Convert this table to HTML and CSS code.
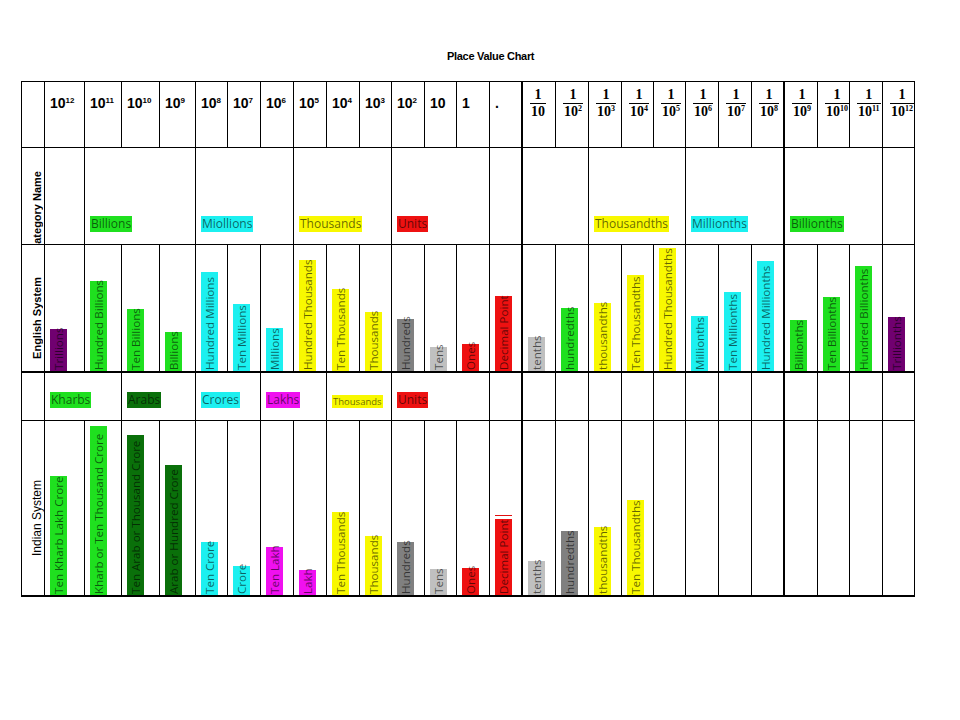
FILE: index.html
```html
<!DOCTYPE html>
<html>
<head>
<meta charset="utf-8">
<title>Place Value Chart</title>
<link rel="stylesheet" href="styles.css">
</head>
<body>
<div class="title">Place Value Chart</div>
<div class="chart">
  <!-- header row -->
  <div class="c"></div>
  <div class="c h"><span class="pw">10<sup>12</sup></span></div>
  <div class="c h"><span class="pw">10<sup>11</sup></span></div>
  <div class="c h"><span class="pw">10<sup>10</sup></span></div>
  <div class="c h"><span class="pw">10<sup>9</sup></span></div>
  <div class="c h"><span class="pw">10<sup>8</sup></span></div>
  <div class="c h"><span class="pw">10<sup>7</sup></span></div>
  <div class="c h"><span class="pw">10<sup>6</sup></span></div>
  <div class="c h"><span class="pw">10<sup>5</sup></span></div>
  <div class="c h"><span class="pw">10<sup>4</sup></span></div>
  <div class="c h"><span class="pw">10<sup>3</sup></span></div>
  <div class="c h"><span class="pw">10<sup>2</sup></span></div>
  <div class="c h"><span class="pw">10</span></div>
  <div class="c h"><span class="pw">1</span></div>
  <div class="c h tk"><span class="pw">.</span></div>
  <div class="c f"><span class="fr"><span class="n">1</span><span class="d">10</span></span></div>
  <div class="c f"><span class="fr"><span class="n">1</span><span class="d">10<sup>2</sup></span></span></div>
  <div class="c f"><span class="fr"><span class="n">1</span><span class="d">10<sup>3</sup></span></span></div>
  <div class="c f"><span class="fr"><span class="n">1</span><span class="d">10<sup>4</sup></span></span></div>
  <div class="c f"><span class="fr"><span class="n">1</span><span class="d">10<sup>5</sup></span></span></div>
  <div class="c f"><span class="fr"><span class="n">1</span><span class="d">10<sup>6</sup></span></span></div>
  <div class="c f"><span class="fr"><span class="n">1</span><span class="d">10<sup>7</sup></span></span></div>
  <div class="c f tk"><span class="fr"><span class="n">1</span><span class="d">10<sup>8</sup></span></span></div>
  <div class="c f"><span class="fr"><span class="n">1</span><span class="d">10<sup>9</sup></span></span></div>
  <div class="c f"><span class="fr"><span class="n">1</span><span class="d">10<sup>10</sup></span></span></div>
  <div class="c f"><span class="fr"><span class="n">1</span><span class="d">10<sup>11</sup></span></span></div>
  <div class="c f"><span class="fr"><span class="n">1</span><span class="d">10<sup>12</sup></span></span></div>

  <!-- category row -->
  <div class="c lab clip"><span class="vl vl-cat">Category Name</span></div>
  <div class="c cat"></div>
  <div class="c cat s3"><span class="tag g">Billions</span></div>
  <div class="c cat s3"><span class="tag c1">Miollions</span></div>
  <div class="c cat s3"><span class="tag y">Thousands</span></div>
  <div class="c cat s3"><span class="tag r">Units</span></div>
  <div class="c cat tk"></div>
  <div class="c cat s2"></div>
  <div class="c cat s3"><span class="tag y">Thousandths</span></div>
  <div class="c cat s3 tk"><span class="tag c1">Millionths</span></div>
  <div class="c cat s3"><span class="tag g">Billionths</span></div>
  <div class="c cat"></div>

  <!-- english system row -->
  <div class="c lab eb"><span class="vl vl-en">English System</span></div>
  <div class="c bars eb"><span class="bar p" style="height:42px">Trillions</span></div>
  <div class="c bars eb"><span class="bar g" style="height:90px">Hundred Billions</span></div>
  <div class="c bars eb"><span class="bar g" style="height:62px">Ten Billions</span></div>
  <div class="c bars eb"><span class="bar g" style="height:39px">Billions</span></div>
  <div class="c bars eb"><span class="bar c1" style="height:99px">Hundred Millions</span></div>
  <div class="c bars eb"><span class="bar c1" style="height:67px">Ten Millions</span></div>
  <div class="c bars eb"><span class="bar c1" style="height:43px">Millions</span></div>
  <div class="c bars eb"><span class="bar y" style="height:111px">Hundred Thousands</span></div>
  <div class="c bars eb"><span class="bar y" style="height:82px">Ten Thousands</span></div>
  <div class="c bars eb"><span class="bar y" style="height:59px">Thousands</span></div>
  <div class="c bars eb"><span class="bar gr" style="height:52px">Hundreds</span></div>
  <div class="c bars eb"><span class="bar lg" style="height:24px">Tens</span></div>
  <div class="c bars eb"><span class="bar r" style="height:27px">Ones</span></div>
  <div class="c bars eb tk"><span class="bar r" style="height:75px">Decimal Point</span></div>
  <div class="c bars eb"><span class="bar lg" style="height:34px">tenths</span></div>
  <div class="c bars eb"><span class="bar g" style="height:63px">hundredths</span></div>
  <div class="c bars eb"><span class="bar y" style="height:68px">thousandths</span></div>
  <div class="c bars eb"><span class="bar y" style="height:96px">Ten Thousandths</span></div>
  <div class="c bars eb"><span class="bar y" style="height:123px">Hundred Thousandths</span></div>
  <div class="c bars eb"><span class="bar c1" style="height:55px">Millionths</span></div>
  <div class="c bars eb"><span class="bar c1" style="height:79px">Ten Millionths</span></div>
  <div class="c bars eb tk"><span class="bar c1" style="height:110px">Hundred Millionths</span></div>
  <div class="c bars eb"><span class="bar g" style="height:51px">Billionths</span></div>
  <div class="c bars eb"><span class="bar g" style="height:74px">Ten Billionths</span></div>
  <div class="c bars eb"><span class="bar g" style="height:105px">Hundred Billionths</span></div>
  <div class="c bars eb"><span class="bar p" style="height:54px">Trillionths</span></div>

  <!-- indian category row -->
  <div class="c cat"></div>
  <div class="c cat s2"><span class="tag g">Kharbs</span></div>
  <div class="c cat s2"><span class="tag dg">Arabs</span></div>
  <div class="c cat s2"><span class="tag c1">Crores</span></div>
  <div class="c cat s2"><span class="tag m">Lakhs</span></div>
  <div class="c cat s2"><span class="tag y small">Thousands</span></div>
  <div class="c cat s3"><span class="tag r">Units</span></div>
  <div class="c cat tk"></div>
  <div class="c cat"></div>
  <div class="c cat"></div>
  <div class="c cat"></div>
  <div class="c cat"></div>
  <div class="c cat"></div>
  <div class="c cat"></div>
  <div class="c cat"></div>
  <div class="c cat tk"></div>
  <div class="c cat"></div>
  <div class="c cat"></div>
  <div class="c cat"></div>
  <div class="c cat"></div>

  <!-- indian system row -->
  <div class="c lab eb"><span class="vl vl-in">Indian System</span></div>
  <div class="c bars eb"><span class="bar g" style="height:119px">Ten Kharb Lakh Crore</span></div>
  <div class="c bars eb"><span class="bar g" style="height:169px">Kharb or Ten Thousand Crore</span></div>
  <div class="c bars eb"><span class="bar dg" style="height:160px">Ten Arab or Thousand Crore</span></div>
  <div class="c bars eb"><span class="bar dg" style="height:130px">Arab or Hundred Crore</span></div>
  <div class="c bars eb"><span class="bar c1" style="height:53px">Ten Crore</span></div>
  <div class="c bars eb"><span class="bar c1" style="height:29px">Crore</span></div>
  <div class="c bars eb"><span class="bar m" style="height:48px">Ten Lakh</span></div>
  <div class="c bars eb"><span class="bar m" style="height:25px">Lakh</span></div>
  <div class="c bars eb"><span class="bar y" style="height:83px">Ten Thousands</span></div>
  <div class="c bars eb"><span class="bar y" style="height:59px">Thousands</span></div>
  <div class="c bars eb"><span class="bar gr" style="height:53px">Hundreds</span></div>
  <div class="c bars eb"><span class="bar lg" style="height:26px">Tens</span></div>
  <div class="c bars eb"><span class="bar r" style="height:27px">Ones</span></div>
  <div class="c bars eb tk"><span class="bar r dp" style="height:76px">Decimal Point</span></div>
  <div class="c bars eb"><span class="bar lg" style="height:34px">tenths</span></div>
  <div class="c bars eb"><span class="bar gr" style="height:64px">hundredths</span></div>
  <div class="c bars eb"><span class="bar y" style="height:68px">thousandths</span></div>
  <div class="c bars eb"><span class="bar y" style="height:95px">Ten Thousandths</span></div>
  <div class="c bars eb"></div>
  <div class="c bars eb"></div>
  <div class="c bars eb"></div>
  <div class="c bars eb tk"></div>
  <div class="c bars eb"></div>
  <div class="c bars eb"></div>
  <div class="c bars eb"></div>
  <div class="c bars eb"></div>
</div>
</body>
</html>
```

FILE: styles.css
```css
html, body {
  margin: 0;
  padding: 0;
  background: #fff;
  color: #000;
  font-family: "Liberation Sans", Arial, sans-serif;
}

.title {
  margin: 50px 0 0 447px;
  font: bold 11px/13px "Liberation Sans", Arial, sans-serif;
  letter-spacing: -0.3px;
  white-space: nowrap;
}

.chart {
  display: grid;
  width: max-content;
  margin: 18px 0 0 21px;
  grid-template-columns: 23px 40px 37px 38px 36px 32px 33px 33px 33px 33px 32px 33px 32px 33px 33px 33px 33px 33px 32px 32px 33px 33px 33px 33px 32px 33px 32px;
  grid-template-rows: 66px 97px 128px 48px 176px;
  border-left: 1px solid #000;
  border-top: 1px solid #000;
}

.c {
  box-sizing: border-box;
  border-right: 1px solid #000;
  border-bottom: 1px solid #000;
  min-width: 0;
  min-height: 0;
}

.tk { border-right-width: 2px; }
.eb { border-bottom-width: 2px; }
.s2 { grid-column: span 2; }
.s3 { grid-column: span 3; }

/* header */
.h {
  padding: 13px 0 0 5px;
  font: bold 14px/16px "Liberation Sans", Arial, sans-serif;
  white-space: nowrap;
}
.h sup, .d sup {
  font-size: 8px;
  line-height: 0;
  vertical-align: 5px;
}
.f {
  padding: 6px 0 0 7px;
  font: bold 14px/14px "Liberation Serif", "Times New Roman", serif;
}
.fr {
  display: inline-flex;
  flex-direction: column;
  align-items: center;
  white-space: nowrap;
}
.fr .n { margin-bottom: 1px; }
.fr .d {
  border-top: 1px solid #000;
  padding: 1px 1px 0;
}

/* vertical row labels */
.lab {
  display: flex;
  justify-content: flex-end;
  align-items: flex-end;
}
.clip { overflow: hidden; }
.vl {
  writing-mode: vertical-rl;
  transform: rotate(180deg);
  white-space: nowrap;
  line-height: 14px;
}
.vl-cat {
  font: bold 11px/14px "Liberation Sans", Arial, sans-serif;
  margin-bottom: -8px;
}
.vl-en {
  font: bold 11px/14px "Liberation Sans", Arial, sans-serif;
  margin-bottom: 12px;
}
.vl-in {
  font: 12px/14px "Liberation Sans", Arial, sans-serif;
  margin-bottom: 39px;
}

/* category labels */
.cat {
  display: flex;
  align-items: flex-end;
  padding: 0 0 12px 5px;
}
.tag {
  font: 12px/16px "Open Sans", "Liberation Sans", sans-serif;
  padding: 0 1px;
  color: rgba(0, 0, 0, 0.6);
  white-space: nowrap;
}
.tag.small {
  font-size: 9.5px;
  line-height: 13px;
}

/* bars */
.bars {
  display: flex;
  align-items: flex-end;
  padding-left: 5px;
}
.bar {
  position: relative;
  flex: 0 0 auto;
  width: 17px;
  box-sizing: border-box;
  writing-mode: vertical-rl;
  transform: rotate(180deg);
  font: 11.6px/17px "Open Sans", "Liberation Sans", sans-serif;
  padding-top: 1px;
  white-space: nowrap;
  color: rgba(0, 0, 0, 0.6);
}
.bar.dp::before {
  content: "";
  position: absolute;
  left: 0;
  right: 0;
  bottom: -4px;
  height: 1px;
  background: #e01010;
}

/* palette */
.g  { background: #1fe01f; }
.dg { background: #0a700a; }
.c1 { background: #1cf0f0; }
.y  { background: #f8f800; }
.r  { background: #ee1111; }
.gr { background: #808080; }
.lg { background: #c0c0c0; }
.m  { background: #f010f0; }
.p  { background: #700070; }
```
